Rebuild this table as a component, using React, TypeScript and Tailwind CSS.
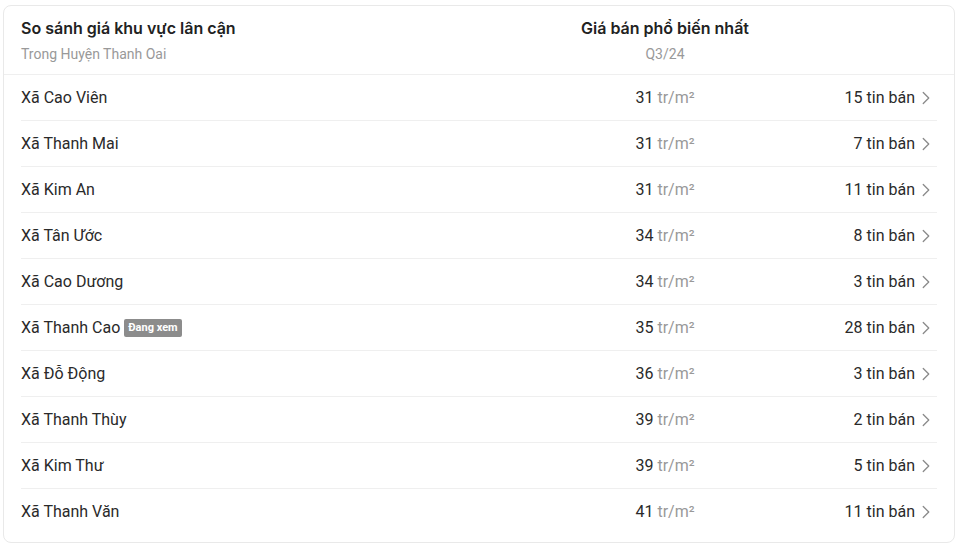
import { ChevronRight } from 'lucide-react';

const rows = [
  { name: 'Xã Cao Viên', price: 31, count: 15 },
  { name: 'Xã Thanh Mai', price: 31, count: 7 },
  { name: 'Xã Kim An', price: 31, count: 11 },
  { name: 'Xã Tân Ước', price: 34, count: 8 },
  { name: 'Xã Cao Dương', price: 34, count: 3 },
  { name: 'Xã Thanh Cao', price: 35, count: 28, current: true },
  { name: 'Xã Đỗ Động', price: 36, count: 3 },
  { name: 'Xã Thanh Thùy', price: 39, count: 2 },
  { name: 'Xã Kim Thư', price: 39, count: 5 },
  { name: 'Xã Thanh Văn', price: 41, count: 11 },
];

export default function App() {
  return (
    <div className="bg-white w-[966px] h-[545px] pt-[5px] px-[3px]" style={{ fontFamily: 'Roboto, "Noto Sans", sans-serif' }}>
      <div className="w-[952px] h-[538px] border border-[#e9e9e9] rounded-lg">
        {/* header */}
        <div className="grid grid-cols-[1fr_200px_172px] px-[17px] pt-[10px] h-[69px] border-b border-[#efefef]">
          <div>
            <div className="text-[16px] font-semibold text-[#222] leading-6" style={{ fontFamily: 'Inter, Roboto, sans-serif' }}>
              So sánh giá khu vực lân cận
            </div>
            <div className="text-[14px] text-[#999] leading-5 mt-[4px]">Trong Huyện Thanh Oai</div>
          </div>
          <div className="text-center">
            <div className="text-[16px] font-semibold text-[#222] leading-6" style={{ fontFamily: 'Inter, Roboto, sans-serif' }}>
              Giá bán phổ biến nhất
            </div>
            <div className="text-[14px] text-[#999] leading-5 mt-[4px]">Q3/24</div>
          </div>
          <div />
        </div>

        {/* rows */}
        <div className="px-[17px]">
          {rows.map((r, i) => (
            <div
              key={r.name}
              className={
                'grid grid-cols-[1fr_200px_172px] items-center h-[46px] ' +
                (i < rows.length - 1 ? 'border-b border-[#efefef]' : '')
              }
            >
              <div className="flex items-center gap-[4px] text-[16px] text-[#2a2a2a]">
                <span>{r.name}</span>
                {r.current && (
                  <span className="bg-[#8c8c8c] text-white text-[11px] font-bold leading-[18px] px-[4px] rounded-[2px]">
                    Đang xem
                  </span>
                )}
              </div>
              <div className="text-center text-[16px] text-[#2a2a2a]">
                {r.price} <span className="text-[#999]">tr/m²</span>
              </div>
              <div className="flex items-center justify-end text-[16px] text-[#2a2a2a]">
                <span>{r.count} tin bán</span>
                <ChevronRight size={22} strokeWidth={1.4} className="text-[#8a8a8a]" />
              </div>
            </div>
          ))}
        </div>
      </div>
    </div>
  );
}
